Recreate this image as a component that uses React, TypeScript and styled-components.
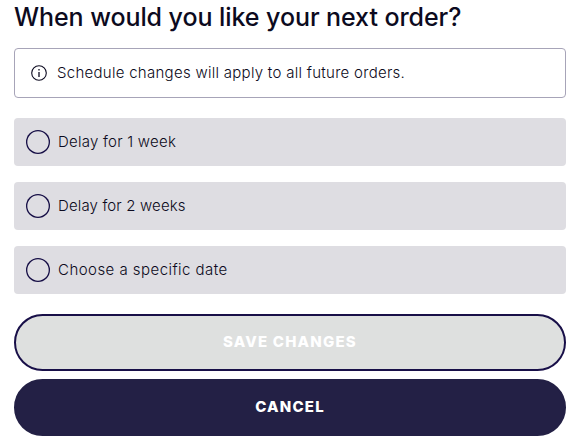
import React from "react";
import styled, { createGlobalStyle } from "styled-components";

const GlobalStyle = createGlobalStyle`
  * { box-sizing: border-box; }
  body { margin: 0; background: #fff; font-family: Inter, "Liberation Sans", sans-serif; color: #0c0a20; }
`;

const Panel = styled.main`
  display: flex;
  flex-direction: column;
  padding: 0 12px 0 14px;
`;

const Title = styled.h1`
  margin: 0;
  height: 48px;
  font-size: 25px;
  line-height: 35px;
  font-weight: 500;
  letter-spacing: -0.07px;
  white-space: nowrap;
`;

const Notice = styled.div`
  display: flex;
  align-items: center;
  gap: 10px;
  height: 50px;
  padding: 0 15px 0 16px;
  border: 1px solid #a7a4b8;
  border-radius: 4px;
`;

const Label = styled.span<{ $tracking: number }>`
  font-size: 15px;
  line-height: 24px;
  font-weight: 300;
  letter-spacing: ${(p) => p.$tracking}px;
  white-space: nowrap;
`;

const Options = styled.div`
  display: flex;
  flex-direction: column;
  gap: 16px;
  margin: 20px 0;
`;

const Option = styled.label`
  display: flex;
  align-items: center;
  gap: 8px;
  height: 48px;
  padding: 0 12px;
  border-radius: 4px;
  background: #dedde2;
`;

const Radio = styled.input.attrs({ type: "radio", name: "schedule" })`
  appearance: none;
  width: 24px;
  height: 24px;
  margin: 0;
  border-radius: 50%;
  box-shadow: inset 0 0 0 1.3px #150d45;
`;

const Actions = styled.div`
  display: flex;
  flex-direction: column;
  gap: 8px;
`;

const Button = styled.button<{ $muted?: boolean; $tracking: number }>`
  height: 57px;
  padding: 0 0 2px;
  border: 2px solid ${(p) => (p.$muted ? "#180f48" : "#232045")};
  border-radius: 29px;
  background: ${(p) => (p.$muted ? "#dee0df" : "#232045")};
  color: #fff;
  font-family: inherit;
  font-size: 15px;
  font-weight: 800;
  letter-spacing: ${(p) => p.$tracking}px;
`;

const InfoIcon = () => (
  <svg width="16" height="16" viewBox="0 0 16 16" fill="none" stroke="#0c0a20">
    <circle cx="8" cy="8" r="7.3" strokeWidth="1.1" />
    <path d="M8 7v5M8 4v1.5" strokeWidth="1.3" />
  </svg>
);

const options = [
  { label: "Delay for 1 week", tracking: 0.24 },
  { label: "Delay for 2 weeks", tracking: 0.14 },
  { label: "Choose a specific date", tracking: 0.46 },
];

export default function App() {
  return (
    <>
      <GlobalStyle />
      <Panel>
        <Title>When would you like your next order?</Title>
        <Notice>
          <InfoIcon />
          <Label $tracking={0.28}>Schedule changes will apply to all future orders.</Label>
        </Notice>
        <Options>
          {options.map((o) => (
            <Option key={o.label}>
              <Radio />
              <Label $tracking={o.tracking}>{o.label}</Label>
            </Option>
          ))}
        </Options>
        <Actions>
          <Button $muted disabled $tracking={1.18}>SAVE CHANGES</Button>
          <Button $tracking={1.2}>CANCEL</Button>
        </Actions>
      </Panel>
    </>
  );
}
